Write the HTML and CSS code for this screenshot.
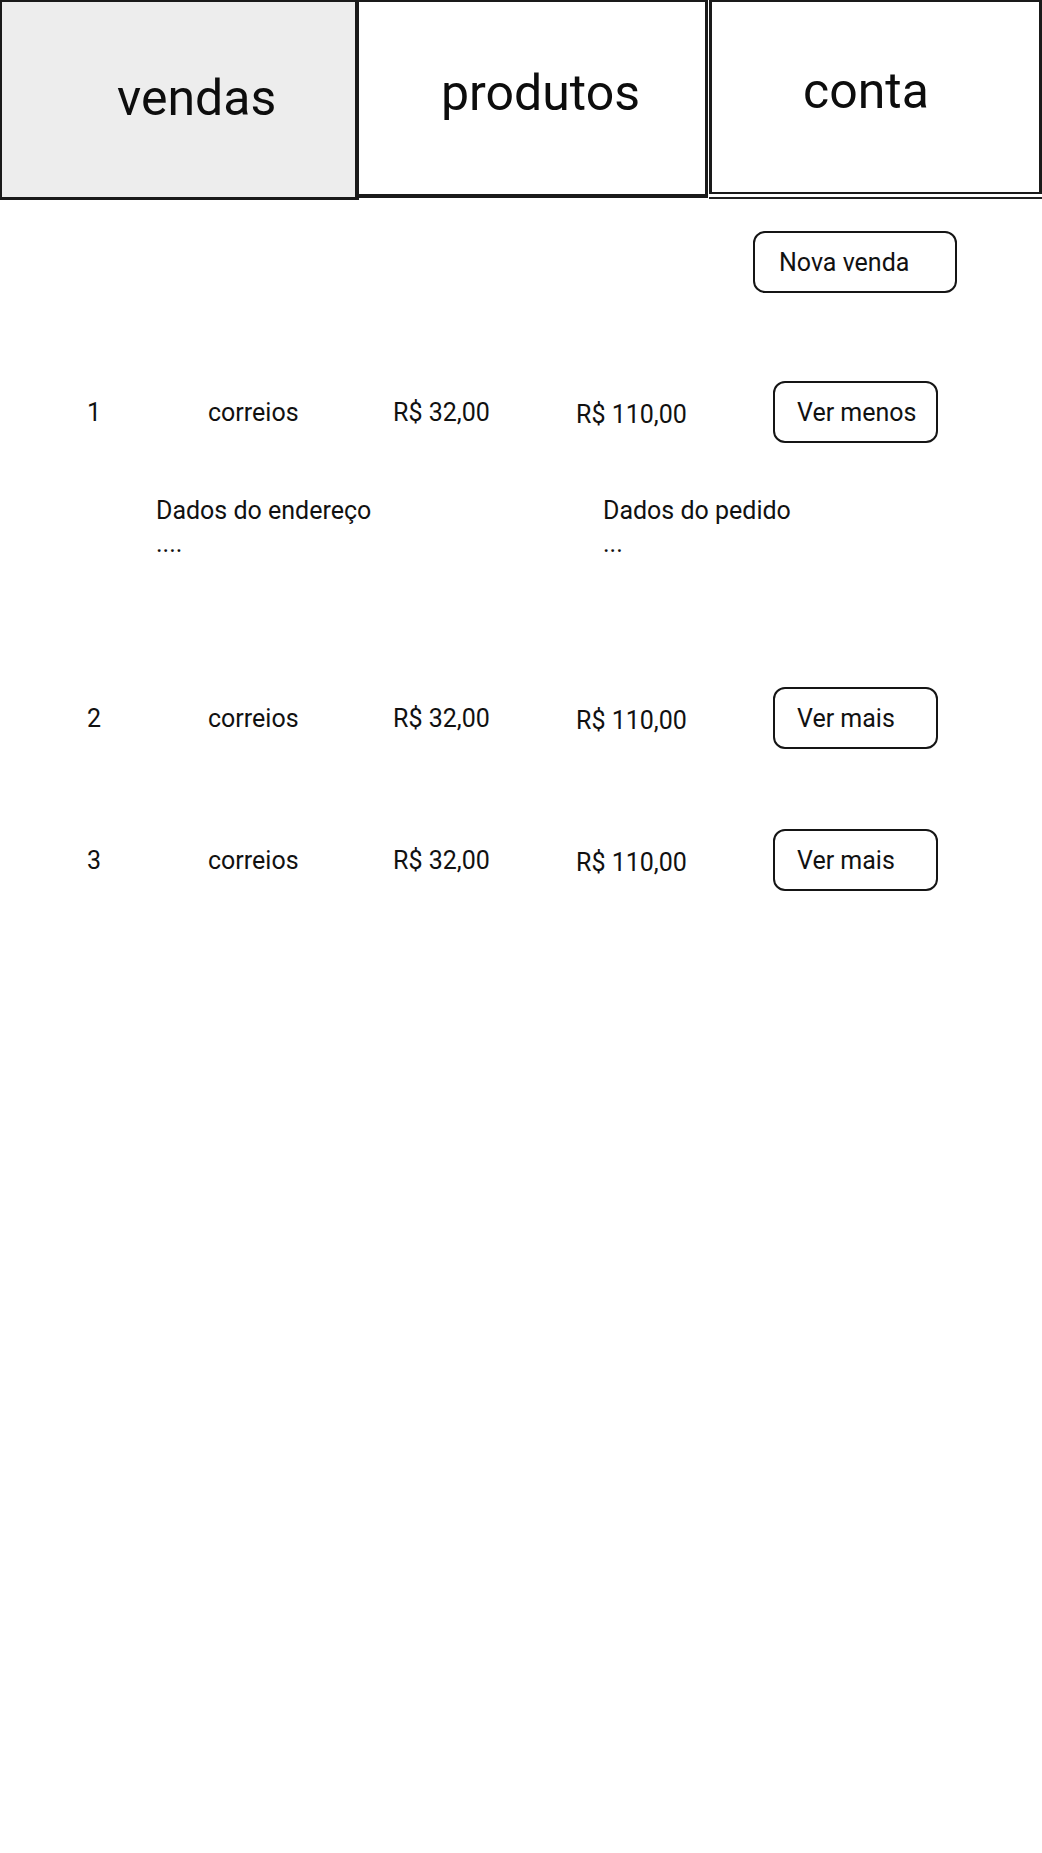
FILE: index.html
```html
<!DOCTYPE html>
<html lang="pt-BR">
<head>
<meta charset="utf-8">
<title>Vendas</title>
<link rel="stylesheet" href="styles.css">
</head>
<body>
<header class="tabs">
  <div class="tab tab-vendas"><span class="tab-label">vendas</span></div>
  <div class="tab tab-produtos"><span class="tab-label">produtos</span></div>
  <div class="tab-conta-wrap">
    <div class="tab tab-conta"><span class="tab-label">conta</span></div>
  </div>
</header>

<main class="content">
  <div class="toolbar">
    <button class="btn btn-new">Nova venda</button>
  </div>

  <section class="sale sale-open">
    <div class="sale-row">
      <span class="cell">1</span>
      <span class="cell">correios</span>
      <span class="cell">R$ 32,00</span>
      <span class="cell cell-total">R$ 110,00</span>
      <button class="btn btn-row">Ver menos</button>
    </div>
    <div class="sale-details">
      <div class="detail">Dados do endereço<br>....</div>
      <div class="detail">Dados do pedido<br>...</div>
    </div>
  </section>

  <section class="sale sale-second">
    <div class="sale-row">
      <span class="cell">2</span>
      <span class="cell">correios</span>
      <span class="cell">R$ 32,00</span>
      <span class="cell cell-total">R$ 110,00</span>
      <button class="btn btn-row">Ver mais</button>
    </div>
  </section>

  <section class="sale sale-third">
    <div class="sale-row">
      <span class="cell">3</span>
      <span class="cell">correios</span>
      <span class="cell">R$ 32,00</span>
      <span class="cell cell-total">R$ 110,00</span>
      <button class="btn btn-row">Ver mais</button>
    </div>
  </section>
</main>
</body>
</html>
```

FILE: styles.css
```css
* { box-sizing: border-box; }

html, body {
  margin: 0;
  padding: 0;
  background: #ffffff;
}

body {
  font-family: Roboto, "Liberation Sans", Arial, sans-serif;
  color: #111111;
  width: 1042px;
}

/* ---------- tabs ---------- */
.tabs {
  display: flex;
  align-items: flex-start;
  height: 200px;
}

.tab {
  font-size: 50px;
  line-height: 50px;
  color: #0d0d0d;
  border: 2px solid #1a1a1a;
}

.tab-vendas {
  width: 359px;
  height: 200px;
  background: #ededed;
  border-right-width: 4px;
  border-bottom-width: 3px;
  padding: 71px 0 0 115px;
}

.tab-produtos {
  width: 349px;
  height: 198px;
  border-left: none;
  border-right-width: 3px;
  border-bottom-width: 4px;
  padding: 66px 0 0 82px;
}

.tab-conta-wrap {
  margin-left: 1px;
  width: 333px;
  padding-bottom: 3px;
  border-bottom: 2px solid #222222;
}

.tab-conta {
  height: 194px;
  border-left-width: 3px;
  border-right-width: 3px;
  padding: 64px 0 0 91px;
}

/* ---------- buttons ---------- */
.btn {
  font-family: inherit;
  font-size: 25px;
  color: #111111;
  background: #ffffff;
  border: 2.5px solid #151515;
  border-radius: 12px;
  text-align: left;
  padding: 0;
  cursor: pointer;
}

.toolbar {
  display: flex;
  justify-content: flex-end;
  padding-right: 85px;
  margin-top: 31px;
}

.btn-new {
  width: 204px;
  height: 62px;
  padding-left: 24px;
}

/* ---------- sales list ---------- */
.sale-open { margin-top: 88px; }
.sale-second { margin-top: 127px; }
.sale-third { margin-top: 80px; }

.sale-row {
  display: grid;
  grid-template-columns: 121px 185px 183px 197px 165px;
  align-items: center;
  padding-left: 87px;
  height: 62px;
  font-size: 25px;
}

.cell-total {
  padding-top: 5px;
}

.btn-row {
  width: 165px;
  height: 62px;
  padding-left: 22px;
}

.sale-details {
  display: grid;
  grid-template-columns: 447px 1fr;
  padding-left: 156px;
  margin-top: 51px;
  font-size: 25px;
  line-height: 33px;
}
```
